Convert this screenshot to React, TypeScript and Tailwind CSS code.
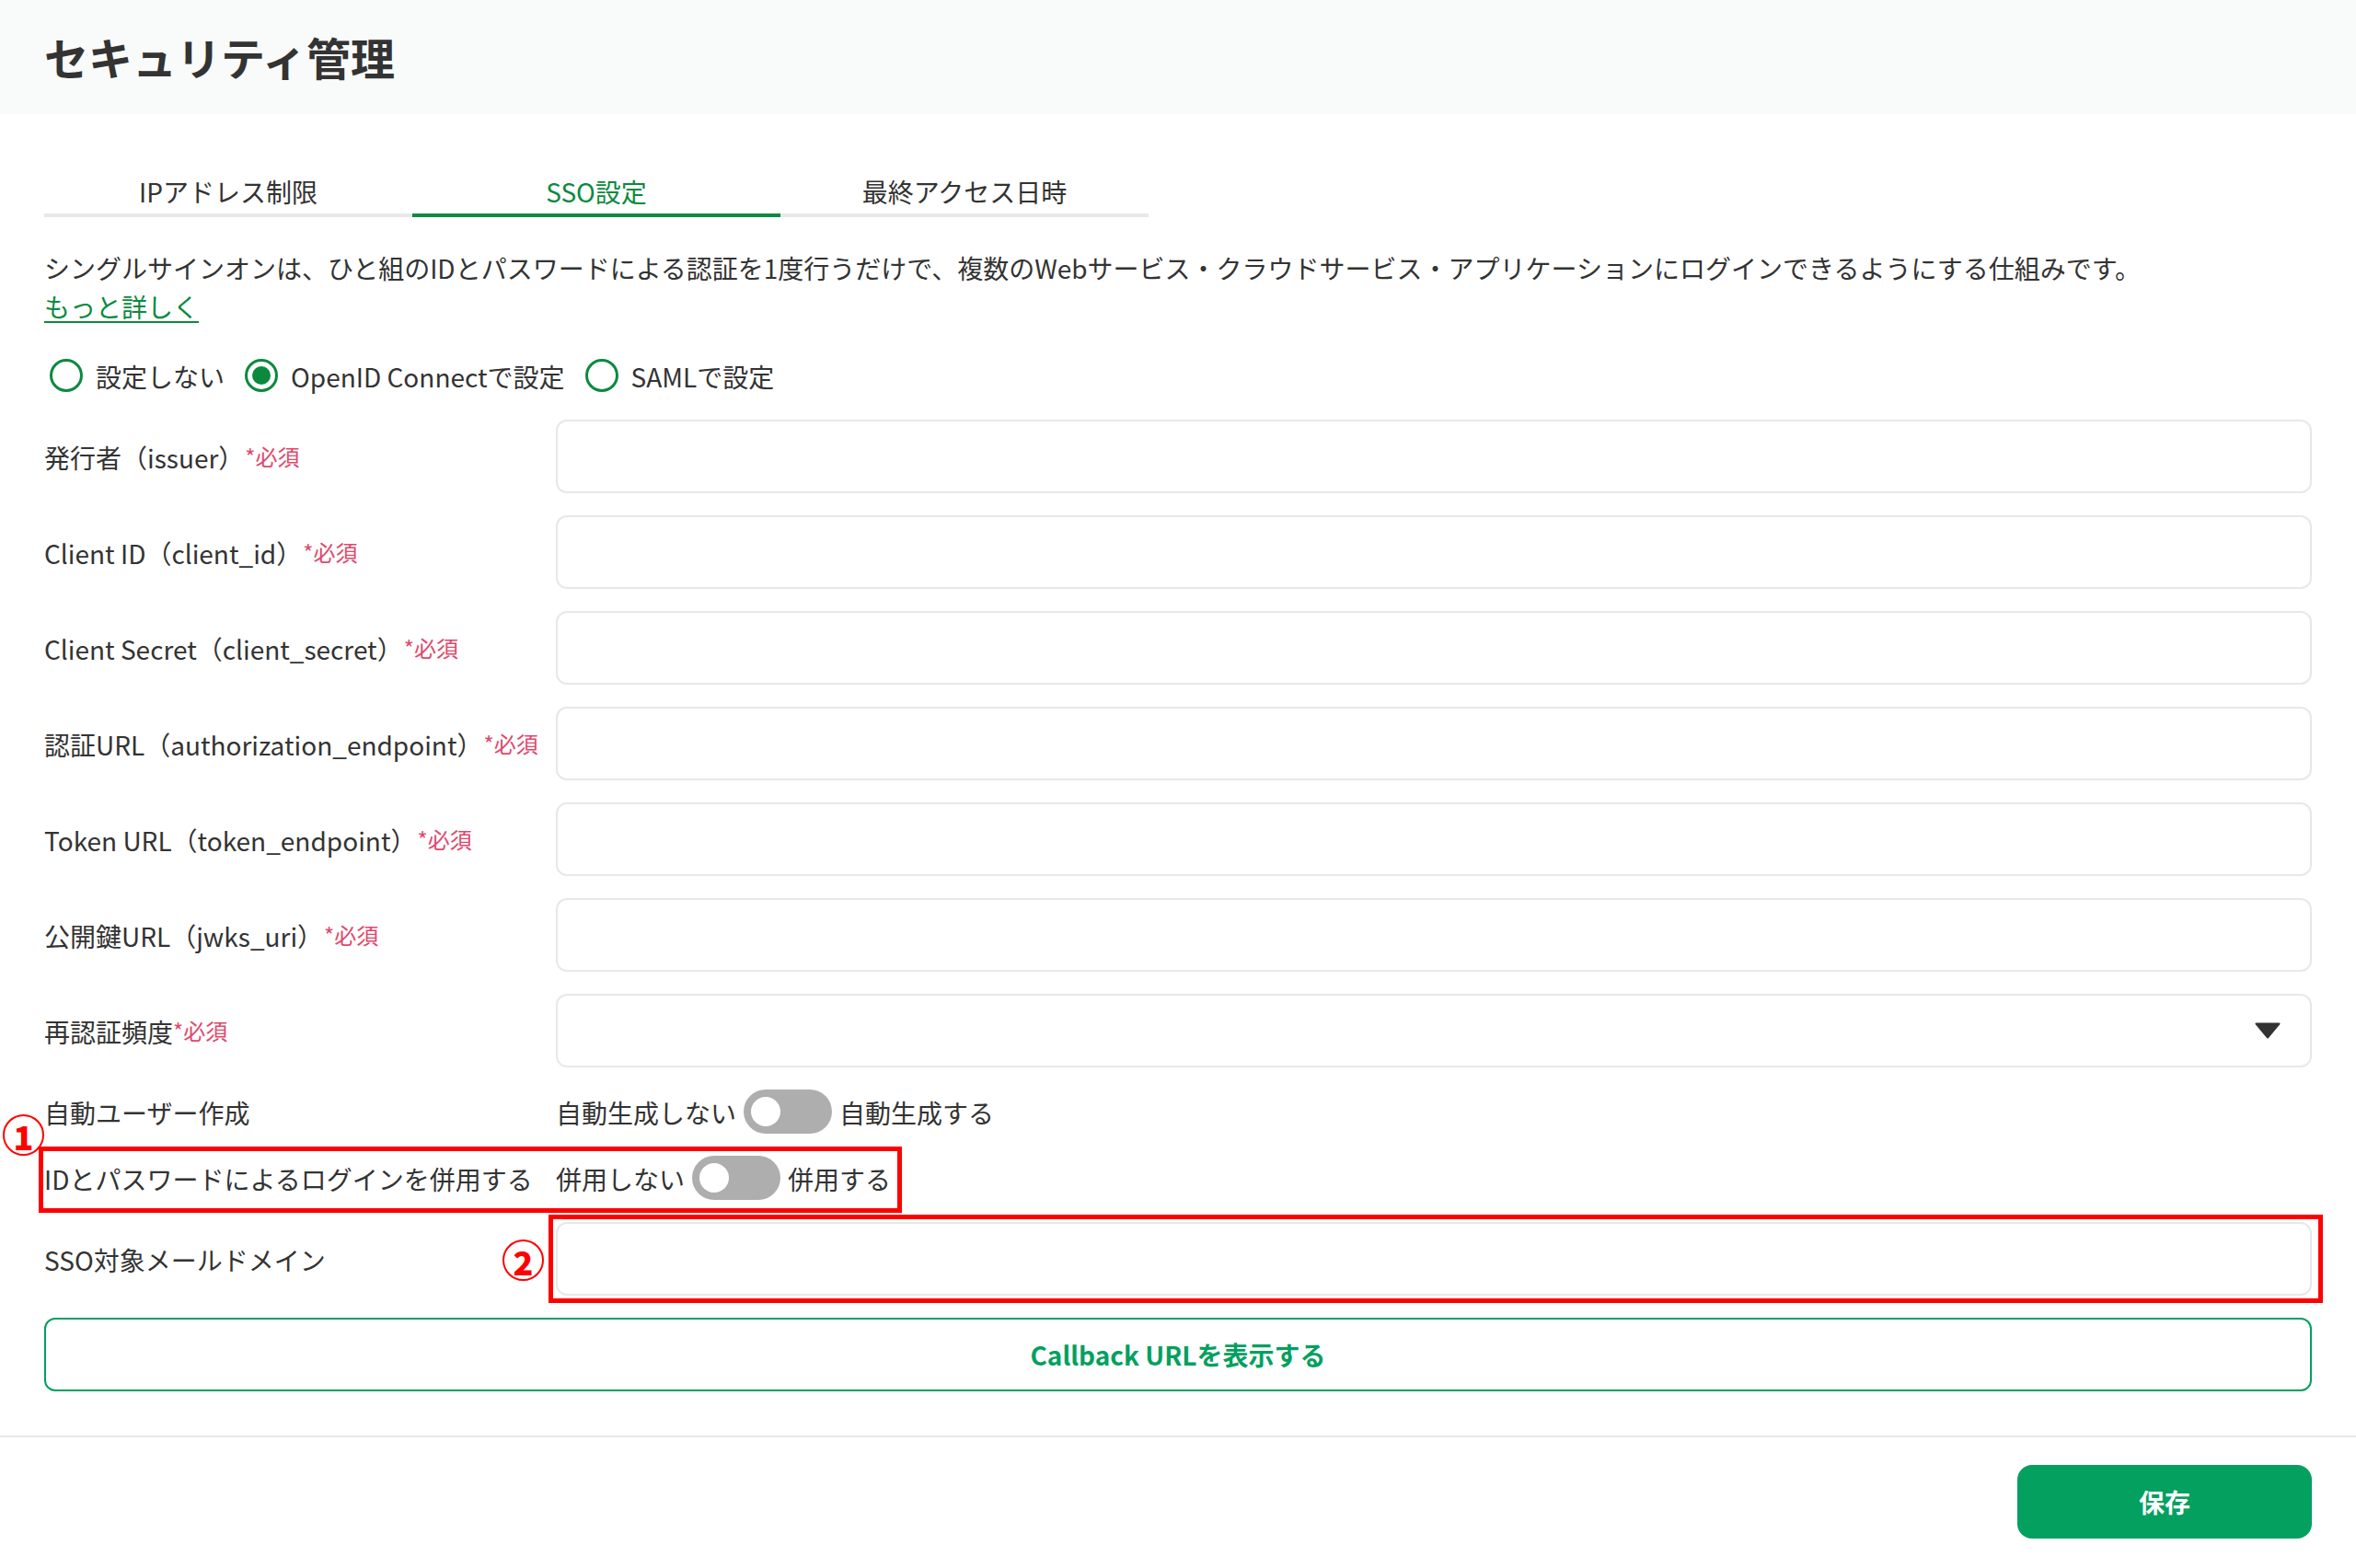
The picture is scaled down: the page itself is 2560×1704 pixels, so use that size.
const fields = [
  { label: "発行者（issuer）" },
  { label: "Client ID（client_id）" },
  { label: "Client Secret（client_secret）" },
  { label: "認証URL（authorization_endpoint）" },
  { label: "Token URL（token_endpoint）" },
  { label: "公開鍵URL（jwks_uri）" },
];

function Required({ tight }: { tight?: boolean }) {
  return <span className={`align-[3px] text-[24px] text-[#e0486c] ${tight ? "" : "ml-px"}`}>*必須</span>;
}

function Radio({ label, checked }: { label: string; checked?: boolean }) {
  return (
    <label className="flex items-center gap-[14px]">
      <span className="flex size-9 items-center justify-center rounded-full border-[3px] border-[#0b8a3e] bg-white">
        {checked ? <span className="size-5 rounded-full bg-[#0b8a3e]" /> : null}
      </span>
      <span className="pt-[2px]">{label}</span>
    </label>
  );
}

function Toggle({ off, on }: { off: string; on: string }) {
  return (
    <div className="flex h-12 items-center gap-2">
      <span className="pt-[2px]">{off}</span>
      <span className="flex h-12 w-24 items-center rounded-full bg-[#aeaeae] pl-2">
        <span className="size-8 rounded-full bg-white" />
      </span>
      <span className="pt-[2px]">{on}</span>
    </div>
  );
}

function Marker({ n, className }: { n: string; className: string }) {
  return (
    <span
      className={`absolute flex size-[45px] items-center justify-center rounded-full border-2 border-[#ff0000] bg-white text-[36px] leading-none font-black text-[#ff0000] ${className}`}
    >
      {n}
    </span>
  );
}

export default function App() {
  return (
    <div className="relative h-[1704px] w-[2560px] bg-white font-['Noto_Sans_CJK_JP','Noto_Sans',sans-serif] text-[28px] leading-[42px] text-[#333333]">
      <header className="flex h-[124px] items-center bg-[#f9fafa] px-12 pb-[2px]">
        <h1 className="text-[48px] leading-none font-bold">セキュリティ管理</h1>
      </header>

      <main className="px-12">
        <div className="mt-[60px] flex w-[1200px]">
          <div className="h-[52px] w-[400px] border-b-4 border-[#e8e8e8] pt-[3px] text-center">IPアドレス制限</div>
          <div className="h-[52px] w-[400px] border-b-4 border-[#0b8a3e] pt-[3px] text-center text-[#0b8a3e]">SSO設定</div>
          <div className="h-[52px] w-[400px] border-b-4 border-[#e8e8e8] pt-[3px] text-center">最終アクセス日時</div>
        </div>

        <p className="mt-[34px]">
          シングルサインオンは、ひと組のIDとパスワードによる認証を1度行うだけで、複数のWebサービス・クラウドサービス・アプリケーションにログインできるようにする仕組みです。
        </p>
        <a className="block w-fit text-[#0b8a3e] underline underline-offset-4">もっと詳しく</a>

        <div className="mt-9 ml-1.5 flex h-9 items-center gap-[22px]">
          <Radio label="設定しない" />
          <Radio label="OpenID Connectで設定" checked />
          <Radio label="SAMLで設定" />
        </div>

        <div className="mt-[30px] flex flex-col gap-6">
          {fields.map((f) => (
            <div key={f.label} className="flex items-center">
              <div className="w-[556px] shrink-0">
                {f.label}
                <Required />
              </div>
              <input className="h-20 w-full rounded-xl border-2 border-[#e8e8e8] bg-white" />
            </div>
          ))}

          <div className="flex items-center">
            <div className="w-[556px] shrink-0">
              再認証頻度
              <Required tight />
            </div>
            <div className="flex h-20 w-full items-center justify-end rounded-xl border-2 border-[#e8e8e8] bg-white pr-[32px]">
              <svg width="28" height="18" viewBox="0 0 28 18">
                <path d="M1.5 1.5h25L14 16.5z" fill="#333333" stroke="#333333" strokeWidth="2" strokeLinejoin="round" />
              </svg>
            </div>
          </div>

          <div className="flex items-center">
            <div className="w-[556px] shrink-0 pt-[2px]">自動ユーザー作成</div>
            <Toggle off="自動生成しない" on="自動生成する" />
          </div>

          <div className="flex items-center">
            <div className="w-[556px] shrink-0 pt-[2px]">IDとパスワードによるログインを併用する</div>
            <Toggle off="併用しない" on="併用する" />
          </div>

          <div className="flex items-center">
            <div className="w-[556px] shrink-0 pt-[2px]">SSO対象メールドメイン</div>
            <input className="h-20 w-full rounded-xl border-2 border-[#e8e8e8] bg-white" />
          </div>

          <button className="h-20 w-full rounded-xl border-2 border-[#03a05f] bg-white font-bold text-[#03a05f]">
            Callback URLを表示する
          </button>
        </div>
      </main>

      <footer className="mt-12 flex justify-end border-t-2 border-[#e8e8e8] px-12 pt-[30px]">
        <button className="h-20 w-80 rounded-2xl bg-[#03a05f] font-bold text-white">保存</button>
      </footer>

      {/* annotations on top of the screenshot */}
      <div className="pointer-events-none absolute top-[1246px] left-[42px] h-[72px] w-[938px] border-[5px] border-[#ff0000]" />
      <div className="pointer-events-none absolute top-[1320px] left-[596px] h-[96px] w-[1928px] border-[5px] border-[#ff0000]" />
      <Marker n="1" className="top-[1211px] left-[3px]" />
      <Marker n="2" className="top-[1347px] left-[546px]" />
    </div>
  );
}
